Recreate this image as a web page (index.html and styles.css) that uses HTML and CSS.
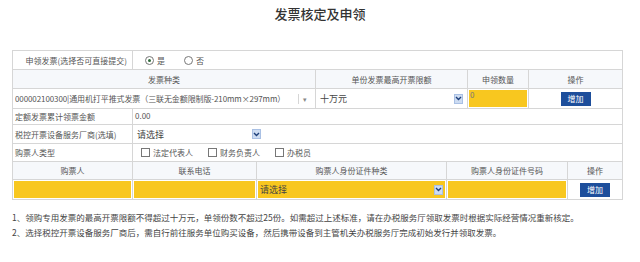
FILE: index.html
```html
<!DOCTYPE html>
<html lang="zh-CN">
<head>
  <meta charset="UTF-8" />
  <title>发票核定及申领</title>
  <link rel="stylesheet" href="styles.css">
</head>
<body>
  <h1>发票核定及申领</h1>

  <div class="form">
    <div class="row cols-2 h19">
      <div class="cell label">申领发票(选择否可直接提交)</div>
      <div class="cell">
        <span class="radio checked"></span><span class="opt">是</span>
        <span class="radio"></span><span class="opt">否</span>
      </div>
    </div>

    <div class="row cols-4 h19 head">
      <div class="cell">发票种类</div>
      <div class="cell">单份发票最高开票限额</div>
      <div class="cell">申领数量</div>
      <div class="cell">操作</div>
    </div>
    <div class="row cols-4 h20">
      <div class="cell">
        <div class="select plain">
          <span class="value">000002100300|通用机打平推式发票（三联无金额限制版-210mm×297mm）</span>
          <span class="drop">▾</span>
        </div>
      </div>
      <div class="cell">
        <div class="select">
          <span class="value big">十万元</span>
          <span class="arrow"><svg width="7" height="5" viewBox="0 0 7 5"><polyline points="1,1 3.5,3.5 6,1" fill="none" stroke="#1e3f7a" stroke-width="1.4"/></svg></span>
        </div>
      </div>
      <div class="cell fill"><div class="input yellow">0</div></div>
      <div class="cell center"><button class="btn">增加</button></div>
    </div>

    <div class="row cols-2 h16">
      <div class="cell">定额发票累计领票金额</div>
      <div class="cell top">0.00</div>
    </div>
    <div class="row cols-2 h19">
      <div class="cell">税控开票设备服务厂商(选填)</div>
      <div class="cell">
        <div class="select short">
          <span class="value big">请选择</span>
          <span class="arrow"><svg width="7" height="5" viewBox="0 0 7 5"><polyline points="1,1 3.5,3.5 6,1" fill="none" stroke="#1e3f7a" stroke-width="1.4"/></svg></span>
        </div>
      </div>
    </div>
    <div class="row cols-2 h18">
      <div class="cell">购票人类型</div>
      <div class="cell">
        <span class="check"></span><span class="opt">法定代表人</span>
        <span class="check"></span><span class="opt">财务负责人</span>
        <span class="check"></span><span class="opt">办税员</span>
      </div>
    </div>

    <div class="row cols-5 h18 head">
      <div class="cell">购票人</div>
      <div class="cell">联系电话</div>
      <div class="cell">购票人身份证件种类</div>
      <div class="cell">购票人身份证件号码</div>
      <div class="cell">操作</div>
    </div>
    <div class="row cols-5 h20">
      <div class="cell fill"><div class="input yellow"></div></div>
      <div class="cell fill"><div class="input yellow"></div></div>
      <div class="cell fill">
        <div class="select yellow">
          <span class="value big">请选择</span>
          <span class="arrow"><svg width="7" height="5" viewBox="0 0 7 5"><polyline points="1,1 3.5,3.5 6,1" fill="none" stroke="#1e3f7a" stroke-width="1.4"/></svg></span>
        </div>
      </div>
      <div class="cell fill"><div class="input yellow"></div></div>
      <div class="cell center"><button class="btn">增加</button></div>
    </div>
  </div>

  <div class="notes">
    <p>1、领购专用发票的最高开票限额不得超过十万元，单领份数不超过25份。如需超过上述标准，请在办税服务厅领取发票时根据实际经营情况重新核定。</p>
    <p>2、选择税控开票设备服务厂商后，需自行前往服务单位购买设备，然后携带设备到主管机关办税服务厅完成初始发行并领取发票。</p>
  </div>
</body>
</html>
```

FILE: styles.css
```css
body {
  margin: 0;
  font-family: "Noto Sans CJK SC", "Noto Sans", sans-serif;
  color: #555;
  background: #fff;
  width: 640px;
}

h1 {
  margin: 0;
  height: 50px;
  padding-top: 6px;
  box-sizing: border-box;
  text-align: center;
  font-size: 13px;
  line-height: 16px;
  font-weight: 500;
  color: #333;
}

.form {
  margin-left: 12px;
  width: 610px;
  border-top: 1px solid #d6d6d6;
  border-left: 1px solid #d6d6d6;
  font-size: 8px;
}

.row {
  display: grid;
}

.cols-2 { grid-template-columns: 120px 490px; }
.cols-4 { grid-template-columns: 303px 152px 61px 94px; }
.cols-5 { grid-template-columns: 120px 124px 190px 121px 55px; }

.h16 { height: 16px; }
.h18 { height: 18px; }
.h19 { height: 19px; }
.h20 { height: 20px; }

.cell {
  box-sizing: border-box;
  border-right: 1px solid #d6d6d6;
  border-bottom: 1px solid #d6d6d6;
  display: flex;
  align-items: center;
  padding: 0 2px;
  white-space: nowrap;
  overflow: hidden;
}

.cell.label {
  justify-content: flex-end;
  padding-right: 5px;
}

.cell.top {
  align-items: flex-start;
  padding-top: 1px;
}

.cell.center {
  justify-content: center;
}

.cell.fill {
  padding: 1px;
  align-items: stretch;
}

.head .cell {
  justify-content: center;
  background: #f6f8fb;
}

.radio {
  width: 7px;
  height: 7px;
  border: 1px solid #777;
  border-radius: 50%;
  margin: 0 3px 0 10px;
  position: relative;
}

.radio.checked::after {
  content: "";
  position: absolute;
  left: 2px;
  top: 2px;
  width: 3px;
  height: 3px;
  border-radius: 50%;
  background: #2f6a3a;
}

.opt {
  margin-right: 9px;
}

.check {
  width: 7px;
  height: 7px;
  border: 1px solid #777;
  margin: 0 3px 0 6px;
}

.select {
  display: flex;
  align-items: center;
  width: 100%;
  height: 100%;
}

.select .value {
  flex: 1;
  overflow: hidden;
}

.select .big {
  font-size: 9px;
  color: #444;
  padding-left: 2px;
}

.select.plain .value {
  font-size: 8px;
  letter-spacing: -0.1px;
}

.select.short {
  width: 128px;
}

.select.yellow {
  background: #f8c71f;
}

.drop {
  width: 12px;
  border-left: 1px solid #d6d6d6;
  text-align: center;
  color: #888;
  font-size: 7px;
  margin-right: 2px;
}

.arrow {
  width: 9px;
  height: 10px;
  background: #cddcf2;
  border: 1px solid #a9c0e4;
  box-sizing: border-box;
  display: flex;
  align-items: center;
  justify-content: center;
  margin-right: 2px;
}

.input {
  flex: 1;
  font-size: 8px;
  line-height: 10px;
  color: #777;
  padding-left: 1px;
}

.input.yellow {
  background: #f8c71f;
}

.btn {
  border: none;
  background: #1d4e9b;
  color: #fff;
  font-family: inherit;
  font-size: 8px;
  width: 30px;
  height: 14px;
  padding: 0;
}

.notes {
  margin-top: 10px;
  padding-left: 12px;
  font-size: 8.5px;
  line-height: 15px;
  color: #444;
}

.notes p {
  margin: 0;
}
```
